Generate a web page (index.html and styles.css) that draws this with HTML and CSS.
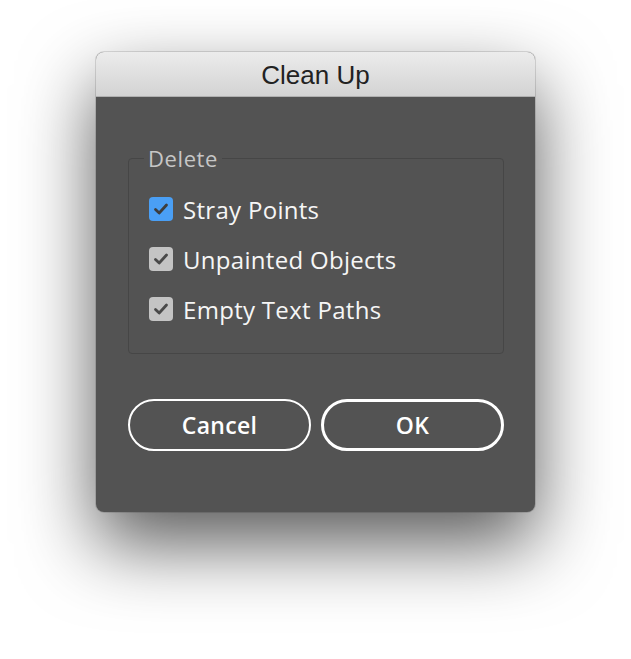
FILE: index.html
```html
<!DOCTYPE html>
<html>
<head>
    <title>Clean Up</title>
    <link rel="stylesheet" href="styles.css">
</head>
<body>
    <div class="window">
        <div class="titlebar">Clean Up</div>
        <div class="content">
            <fieldset class="group">
                <legend>Delete</legend>
                <label class="option">
                    <span class="box box-on">
                        <svg width="16" height="16" viewBox="0 0 16 16"><path d="M2.5 8.5 L6.2 12 L13.5 4" fill="none" stroke="#3d3d3d" stroke-width="2.8" stroke-linecap="round" stroke-linejoin="round"/></svg>
                    </span>
                    Stray Points
                </label>
                <label class="option">
                    <span class="box">
                        <svg width="16" height="16" viewBox="0 0 16 16"><path d="M2.5 8.5 L6.2 12 L13.5 4" fill="none" stroke="#4a4a4a" stroke-width="2.8" stroke-linecap="round" stroke-linejoin="round"/></svg>
                    </span>
                    Unpainted Objects
                </label>
                <label class="option">
                    <span class="box">
                        <svg width="16" height="16" viewBox="0 0 16 16"><path d="M2.5 8.5 L6.2 12 L13.5 4" fill="none" stroke="#4a4a4a" stroke-width="2.8" stroke-linecap="round" stroke-linejoin="round"/></svg>
                    </span>
                    Empty Text Paths
                </label>
            </fieldset>
            <div class="buttons">
                <button class="btn">Cancel</button>
                <button class="btn btn-default">OK</button>
            </div>
        </div>
    </div>
</body>
</html>
```

FILE: styles.css
```css
body {
    margin: 0;
    min-height: 659px;
    box-sizing: border-box;
    background-color: #ffffff;
    display: flex;
    justify-content: center;
    align-items: flex-start;
    padding-top: 52px;
    font-family: "Open Sans", "Liberation Sans", sans-serif;
}
.window {
    width: 439px;
    height: 460px;
    border-radius: 8px;
    background-color: #535353;
    box-shadow: 0 32px 75px rgba(0, 0, 0, 0.65), 0 0 0 1px rgba(0, 0, 0, 0.12);
    overflow: hidden;
}
.titlebar {
    height: 44px;
    line-height: 47px;
    text-align: center;
    font-family: "Liberation Sans", Arial, sans-serif;
    font-size: 26px;
    color: #222222;
    background: linear-gradient(#ececec, #d3d3d3);
    border-bottom: 1px solid #b0b0b0;
}
.content {
    padding: 50px 31px 0 32px;
}
.group {
    margin: 0;
    padding: 15px 0 0 20px;
    border: 1px solid #464646;
    border-radius: 4px;
    height: 207px;
    box-sizing: border-box;
}
.group legend {
    margin-left: -5px;
    padding: 0 4px;
    color: #c6c6c6;
    font-size: 22px;
    line-height: 22px;
    letter-spacing: 0.6px;
}
.option {
    display: flex;
    align-items: center;
    gap: 10px;
    height: 50px;
    color: #f6f6f6;
    font-size: 24px;
    letter-spacing: 0.3px;
}
.box {
    width: 24px;
    height: 24px;
    border-radius: 4px;
    background-color: #c4c4c4;
    display: flex;
    align-items: center;
    justify-content: center;
}
.box-on {
    background-color: #4a9ff5;
}
.buttons {
    display: flex;
    gap: 10px;
    margin-top: 45px;
}
.btn {
    width: 184px;
    height: 52px;
    border: 2px solid #ffffff;
    border-radius: 26px;
    background: transparent;
    color: #ffffff;
    font-family: "Open Sans", "Liberation Sans", sans-serif;
    font-size: 23px;
    font-weight: 600;
    letter-spacing: 0.3px;
}
.btn-default {
    border-width: 3px;
}
```
